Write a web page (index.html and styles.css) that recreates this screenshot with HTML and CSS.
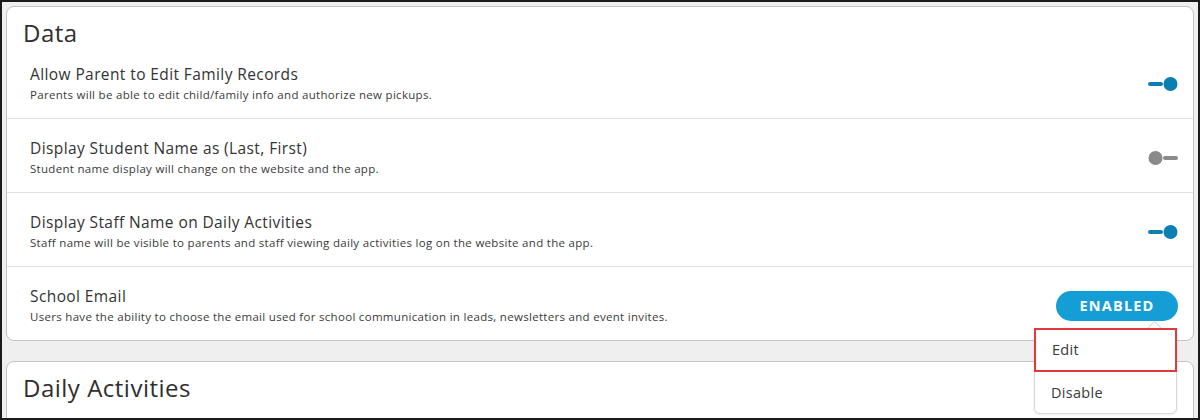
FILE: index.html
```html
<!DOCTYPE html>
<html lang="en">
<head>
<meta charset="utf-8">
<title>Settings - Data</title>
<link rel="stylesheet" href="styles.css">
</head>
<body>
<div class="frame">
  <section class="card">
    <h2 class="card-title">Data</h2>
    <div class="row row-first">
      <div class="row-text">
        <div class="row-title">Allow Parent to Edit Family Records</div>
        <div class="row-desc">Parents will be able to edit child/family info and authorize new pickups.</div>
      </div>
      <svg class="toggle" width="30" height="14" viewBox="0 0 30 14" aria-label="On">
        <line x1="2" y1="7" x2="13" y2="7" stroke="#0b7fb2" stroke-width="4" stroke-linecap="round"/>
        <circle cx="22.5" cy="7" r="7" fill="#0b7fb2"/>
      </svg>
    </div>
    <div class="row">
      <div class="row-text">
        <div class="row-title">Display Student Name as (Last, First)</div>
        <div class="row-desc">Student name display will change on the website and the app.</div>
      </div>
      <svg class="toggle" width="30" height="14" viewBox="0 0 30 14" aria-label="Off">
        <circle cx="7.5" cy="7" r="7" fill="#8a8a8a"/>
        <line x1="17" y1="7" x2="28" y2="7" stroke="#8a8a8a" stroke-width="4" stroke-linecap="round"/>
      </svg>
    </div>
    <div class="row">
      <div class="row-text">
        <div class="row-title">Display Staff Name on Daily Activities</div>
        <div class="row-desc">Staff name will be visible to parents and staff viewing daily activities log on the website and the app.</div>
      </div>
      <svg class="toggle" width="30" height="14" viewBox="0 0 30 14" aria-label="On">
        <line x1="2" y1="7" x2="13" y2="7" stroke="#0b7fb2" stroke-width="4" stroke-linecap="round"/>
        <circle cx="22.5" cy="7" r="7" fill="#0b7fb2"/>
      </svg>
    </div>
    <div class="row">
      <div class="row-text">
        <div class="row-title">School Email</div>
        <div class="row-desc">Users have the ability to choose the email used for school communication in leads, newsletters and event invites.</div>
      </div>
      <div class="action">
        <button class="btn-enabled">ENABLED</button>
        <div class="menu">
          <span class="menu-caret"></span>
          <div class="menu-item menu-item-active">Edit</div>
          <div class="menu-item">Disable</div>
        </div>
      </div>
    </div>
  </section>
  <section class="card card-second">
    <h2 class="card-title">Daily Activities</h2>
  </section>
</div>
</body>
</html>
```
FILE: styles.css
```css
html, body {
  margin: 0;
  padding: 0;
}
body {
  font-family: "Open Sans", "Liberation Sans", sans-serif;
  color: #333;
}
.frame {
  box-sizing: border-box;
  width: 1200px;
  height: 420px;
  border: 2px solid #1b1b1b;
  background: #efefef;
  padding: 4px 4px 0 4px;
  overflow: hidden;
  display: flex;
  flex-direction: column;
  gap: 20px;
}
.card {
  background: #fff;
  border: 1px solid #c4c4c4;
  border-radius: 8px;
  flex: none;
}
.card-title {
  margin: 0;
  padding: 11px 16px 0 16px;
  font-size: 24px;
  font-weight: 400;
  letter-spacing: 0.5px;
  line-height: 30px;
  color: #2f2f2f;
}
.row {
  display: flex;
  align-items: center;
  justify-content: space-between;
  padding: 19px 15px 15px 23px;
  border-top: 1px solid #e0e0e0;
}
.row-first {
  border-top: none;
  padding-top: 16px;
}
.row-title {
  font-size: 15.5px;
  line-height: 20px;
  letter-spacing: 0.4px;
  color: #333;
}
.row-desc {
  font-size: 11.5px;
  line-height: 16px;
  letter-spacing: 0.3px;
  margin-top: 3px;
  color: #3a3a3a;
}
.toggle {
  display: block;
  flex: none;
}
.action {
  position: relative;
  flex: none;
}
.btn-enabled {
  display: block;
  width: 122px;
  height: 30px;
  border: none;
  border-radius: 15px;
  background: #159ed5;
  color: #fff;
  font-family: "Open Sans", "Liberation Sans", sans-serif;
  font-weight: 700;
  font-size: 14.5px;
  letter-spacing: 1.2px;
  padding: 0;
}
.menu {
  position: absolute;
  top: 37px;
  right: 1px;
  width: 141px;
  background: #fff;
  border: 1px solid #d6d6d6;
  border-radius: 6px;
  box-shadow: 0 1px 3px rgba(0, 0, 0, 0.08);
  z-index: 2;
}
.menu-caret {
  position: absolute;
  top: -6px;
  right: 16px;
  width: 10px;
  height: 10px;
  background: #fff;
  border-left: 1px solid #d6d6d6;
  border-top: 1px solid #d6d6d6;
  transform: rotate(45deg);
}
.menu-item {
  position: relative;
  padding: 0 16px;
  height: 41px;
  line-height: 41px;
  font-size: 14.5px;
  letter-spacing: 0.3px;
  color: #3a3a3a;
}
.menu-item-active {
  margin: -1px -1px 0 -1px;
  height: 40px;
  line-height: 40px;
  border: 2px solid #e5373d;
}
.card-second {
  height: 200px;
}
```
